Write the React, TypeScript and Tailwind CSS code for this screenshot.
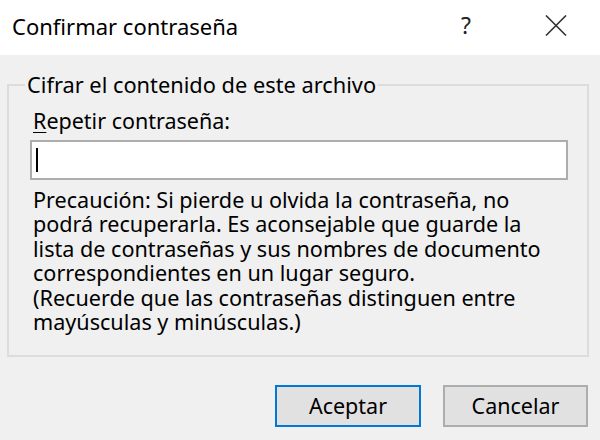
import React from 'react';

const font = { fontFamily: '"Noto Sans", "Open Sans", sans-serif' };

export default function App() {
  return (
    <div
      className="w-[600px] h-[440px] bg-[#f0f0f0] flex flex-col text-[#000] overflow-hidden"
      style={font}
    >
      {/* Title bar */}
      <div className="h-[55px] bg-white flex items-center shrink-0">
        <div className="pl-[12px] text-[22px] leading-none text-black flex-1 pb-[4px]">
          Confirmar contraseña
        </div>
        <div className="w-[40px] flex justify-center text-[23px] leading-none text-[#222] mr-[50px] pb-[4px]">?</div>
        <div className="w-[40px] flex justify-center mr-[24px] pb-[4px]">
          <svg width="22" height="21" viewBox="0 0 22 21">
            <path d="M1 0.5 L21 20.5 M21 0.5 L1 20.5" stroke="#333" strokeWidth="1.6" fill="none" />
          </svg>
        </div>
      </div>

      {/* Group box */}
      <fieldset className="mt-[18px] ml-[7px] mr-[11px] h-[284px] border-2 border-[#dcdcdc] pl-[24px] pr-[10px] pt-[12px]">
        <legend className="ml-[-8px] px-[2px] text-[21.8px] leading-[24px]">
          Cifrar el contenido de este archivo
        </legend>
        <div className="text-[21.5px] leading-[24px]">
          <span className="underline underline-offset-[3px] decoration-1">R</span>epetir contraseña:
        </div>
        <div className="ml-[-3px] mt-[7px] w-[538px] h-[40px] bg-white border-2 border-[#adadad] flex items-center pl-[4px]">
          <div className="w-[2px] h-[24px] bg-black" />
        </div>
        <p className="mt-[8px] text-[21.6px] leading-[24.4px] whitespace-nowrap">
          Precaución: Si pierde u olvida la contraseña, no
          <br />
          podrá recuperarla. Es aconsejable que guarde la
          <br />
          lista de contraseñas y sus nombres de documento
          <br />
          correspondientes en un lugar seguro.
          <br />
          (Recuerde que las contraseñas distinguen entre
          <br />
          mayúsculas y minúsculas.)
        </p>
      </fieldset>

      {/* Buttons */}
      <div className="flex justify-end gap-[22px] mt-[28px] mr-[12px]">
        <button className="w-[146px] h-[42px] bg-[#e1e1e1] border-2 border-[#0078d7] text-[21.5px] leading-none">
          Aceptar
        </button>
        <button className="w-[145px] h-[42px] bg-[#e1e1e1] border-2 border-[#adadad] text-[21.5px] leading-none">
          Cancelar
        </button>
      </div>
    </div>
  );
}
